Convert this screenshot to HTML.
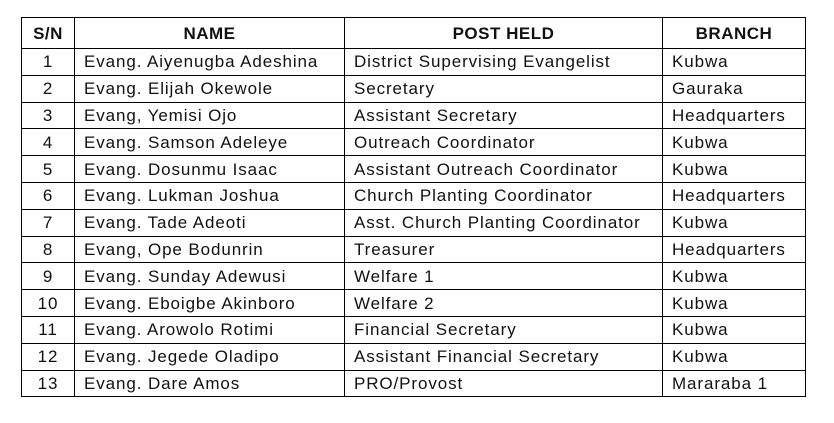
<!DOCTYPE html>
<html><head><style>
html,body{margin:0;padding:0;background:#fff;width:834px;height:423px;overflow:hidden}
table{position:absolute;left:21px;top:17px;border-collapse:collapse;font-family:"Liberation Sans",sans-serif;font-size:17px;color:#111;table-layout:fixed}
td,th{border:1px solid #000;padding:0 0 0 9px;height:25.8px;line-height:25px;white-space:nowrap;overflow:hidden}
th{height:30px;font-weight:bold;text-align:center;padding:0;font-size:17px;letter-spacing:0.5px}
td.c{text-align:center;padding:0}
td{letter-spacing:0.9px}
</style></head><body>
<table>
<colgroup><col style="width:53px"><col style="width:270px"><col style="width:318px"><col style="width:143px"></colgroup>
<tr><th>S/N</th><th>NAME</th><th>POST HELD</th><th>BRANCH</th></tr>
<tr><td class="c">1</td><td>Evang. Aiyenugba Adeshina</td><td>District Supervising Evangelist</td><td>Kubwa</td></tr>
<tr><td class="c">2</td><td>Evang. Elijah Okewole</td><td>Secretary</td><td>Gauraka</td></tr>
<tr><td class="c">3</td><td>Evang, Yemisi Ojo</td><td>Assistant Secretary</td><td>Headquarters</td></tr>
<tr><td class="c">4</td><td>Evang. Samson Adeleye</td><td>Outreach Coordinator</td><td>Kubwa</td></tr>
<tr><td class="c">5</td><td>Evang. Dosunmu Isaac</td><td>Assistant Outreach Coordinator</td><td>Kubwa</td></tr>
<tr><td class="c">6</td><td>Evang. Lukman Joshua</td><td>Church Planting Coordinator</td><td>Headquarters</td></tr>
<tr><td class="c">7</td><td>Evang. Tade Adeoti</td><td>Asst. Church Planting Coordinator</td><td>Kubwa</td></tr>
<tr><td class="c">8</td><td>Evang, Ope Bodunrin</td><td>Treasurer</td><td>Headquarters</td></tr>
<tr><td class="c">9</td><td>Evang. Sunday Adewusi</td><td>Welfare 1</td><td>Kubwa</td></tr>
<tr><td class="c">10</td><td>Evang. Eboigbe Akinboro</td><td>Welfare 2</td><td>Kubwa</td></tr>
<tr><td class="c">11</td><td>Evang. Arowolo Rotimi</td><td>Financial Secretary</td><td>Kubwa</td></tr>
<tr><td class="c">12</td><td>Evang. Jegede Oladipo</td><td>Assistant Financial Secretary</td><td>Kubwa</td></tr>
<tr><td class="c">13</td><td>Evang. Dare Amos</td><td>PRO/Provost</td><td>Mararaba 1</td></tr>
</table>
</body></html>
